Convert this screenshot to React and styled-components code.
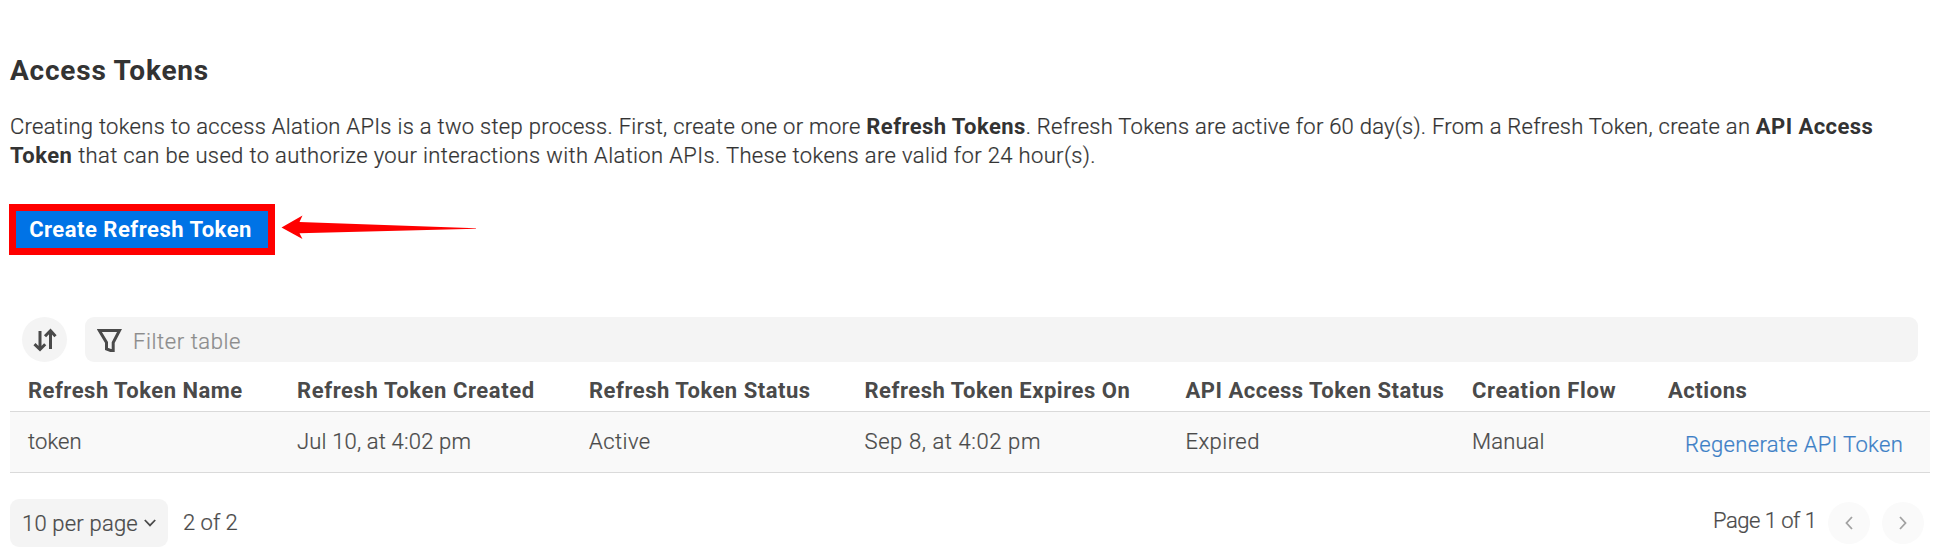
import React from "react";
import styled, { createGlobalStyle } from "styled-components";

const GlobalStyle = createGlobalStyle`
  * { box-sizing: border-box; }
  body {
    margin: 0;
    background: #fff;
    color: #4a4a4a;
    font: 300 22px/29px Roboto, "Liberation Sans", sans-serif;
    -webkit-text-stroke: 0.22px currentColor;
  }
  button, input { font: inherit; color: inherit; border: 0; padding: 0; margin: 0; }
`;

const Text = styled.span`
  white-space: pre;
  letter-spacing: ${(p) => p.$track || 0}px;
`;

const Strong = styled(Text).attrs({ as: "strong" })`
  font-weight: 700;
  -webkit-text-stroke: 0;
`;

const Page = styled.main`
  width: 1934px;
  height: 558px;
  padding: 53px 4px 0 10px;
  display: flex;
  flex-direction: column;
  overflow: hidden;
`;

const Title = styled.h1`
  margin: 0;
  height: 36px;
  color: #333;
  font-size: 28px;
  line-height: 36px;
  font-weight: 700;
  letter-spacing: 0.78px;
  -webkit-text-stroke: 0;
`;

const Intro = styled.p`
  margin: 23px 0 0;
  color: #333;
  white-space: nowrap;
`;

const CreateRow = styled.div`
  display: flex;
  align-items: flex-start;
  gap: 6px;
  margin: 34px 0 0 -1px;
`;

const CreateButton = styled.button`
  width: 266px;
  height: 51px;
  border: 7.5px solid #ff0000;
  background: #0073e6;
  color: #fff;
  font-weight: 700;
  letter-spacing: 0.5px;
  padding: 0 3px 0 0;
  white-space: nowrap;
  -webkit-text-stroke: 0;
`;

const Arrow = styled.svg`
  width: 196px;
  height: 26px;
  margin-top: 10px;
`;

const Toolbar = styled.div`
  display: flex;
  align-items: center;
  gap: 18px;
  margin: 62px 12px 0;
`;

const SortButton = styled.button`
  display: grid;
  place-items: center;
  width: 45px;
  height: 45px;
  border-radius: 50%;
  background: #f4f4f4;
`;

const Filter = styled.label`
  flex: 1;
  display: flex;
  align-items: center;
  gap: 11px;
  height: 45px;
  padding-left: 12px;
  border-radius: 9px;
  background: #f4f4f4;
`;

const FilterInput = styled.input`
  flex: 1;
  height: 29px;
  margin-top: 3px;
  background: none;
  outline: 0;
  letter-spacing: 0.6px;
  &::placeholder { color: #8c8c8c; opacity: 1; }
`;

const Row = styled.div`
  display: grid;
  grid-template-columns: 269px 292px 275.5px 321px 286.5px 196px 1fr;
  padding-left: 18px;
`;

const HeadRow = styled(Row)`
  height: 49px;
  padding-top: 14px;
  font-weight: 700;
  -webkit-text-stroke: 0;
`;

const BodyRow = styled(Row)`
  height: 62px;
  padding-top: 15px;
  border: solid #dadada;
  border-width: 1px 0;
  background: #f9f9f9;
`;

const ActionLink = styled.a`
  margin: 3px 0 0 17px;
  color: #3d80c6;
  letter-spacing: 0.33px;
  white-space: nowrap;
`;

const Footer = styled.footer`
  display: flex;
  align-items: flex-start;
  margin-top: 26px;
`;

const PageSize = styled.button`
  display: flex;
  align-items: center;
  gap: 6px;
  width: 158px;
  height: 48px;
  padding: 0 0 0 12px;
  border-radius: 9px;
  background: #f4f4f4;
`;

const Count = styled.div`
  margin: 9px 0 0 15px;
`;

const Pager = styled.nav`
  display: flex;
  align-items: flex-start;
  gap: 12px;
  margin-left: auto;
  padding: 3px 6px 0 0;
`;

const PageLabel = styled.div`
  margin-top: 4px;
  width: 103px;
`;

const PageButton = styled.button`
  display: grid;
  place-items: center;
  width: 42px;
  height: 42px;
  border-radius: 50%;
  background: #fafafa;
  color: #a2a2a2;
`;

const Stroke = styled.svg.attrs({ fill: "none", stroke: "currentColor" })`
  display: block;
  flex: none;
`;

const columns = [
  ["Refresh Token Name", 0.5],
  ["Refresh Token Created", 0.6],
  ["Refresh Token Status", 0.51],
  ["Refresh Token Expires On", 0.52],
  ["API Access Token Status", 0.51],
  ["Creation Flow", 0.66],
  ["Actions", 0.55],
];

const tokenRow = [
  ["token", 0.1],
  ["Jul 10, at 4:02 pm", 0.17],
  ["Active", 0.45],
  ["Sep 8, at 4:02 pm", 0.6],
  ["Expired", 0.45],
  ["Manual", 0.15],
];

export default function App() {
  return (
    <Page>
      <GlobalStyle />
      <Title>Access Tokens</Title>
      <Intro>
        <Text $track={0.29}>{"Creating tokens to access Alation APIs is a two step process. First, create one or more "}</Text>
        <Strong $track={0.43}>Refresh Tokens</Strong>
        <Text $track={0.25}>{". Refresh Tokens are active for 60 day(s). From a Refresh Token, create an "}</Text>
        <Strong $track={0.43}>API Access</Strong>
        <br />
        <Strong $track={0.5}>Token</Strong>
        <Text $track={0.36}>{" that can be used to authorize your interactions with Alation APIs. These tokens are valid for 24 hour(s)."}</Text>
      </Intro>

      <CreateRow>
        <CreateButton>Create Refresh Token</CreateButton>
        <Arrow viewBox="0 0 196 26">
          <path fill="#ff0000" d="M.5 13.5 21.5 1.5 18.5 8 195 14.3v.5L18.5 19.3 21.5 25Z" />
        </Arrow>
      </CreateRow>

      <Toolbar>
        <SortButton aria-label="Sort">
          <Stroke width="24" height="24" strokeWidth="3" strokeLinejoin="miter">
            <path d="M7 3v18M1.5 16.2 7 21.5l5.2-5.3M17.5 21V3M12 8.3 17.5 2.7l5 5.6" />
          </Stroke>
        </SortButton>
        <Filter>
          <Stroke width="25" height="26" strokeWidth="3" strokeLinejoin="miter">
            <path d="M2.3 3.5h20.2L16.2 15.5v8h-2.7l-4-1.5v-6.5Z" />
          </Stroke>
          <FilterInput placeholder="Filter table" />
        </Filter>
      </Toolbar>

      <HeadRow>
        {columns.map(([label, track]) => <Text key={label} $track={track}>{label}</Text>)}
      </HeadRow>
      <BodyRow>
        {tokenRow.map(([value, track]) => <Text key={value} $track={track}>{value}</Text>)}
        <ActionLink>Regenerate API Token</ActionLink>
      </BodyRow>

      <Footer>
        <PageSize>
          <Text $track={0.2}>10 per page</Text>
          <Stroke width="12" height="8" strokeWidth="1.8"><path d="m.8 1 5.2 5.4L11.2 1" /></Stroke>
        </PageSize>
        <Count>2 of 2</Count>
        <Pager>
          <PageLabel><Text $track={-0.5}>Page 1 of 1</Text></PageLabel>
          <PageButton aria-label="Previous page">
            <Stroke width="8" height="14" strokeWidth="1.8"><path d="M7 1 1.5 7 7 13" /></Stroke>
          </PageButton>
          <PageButton aria-label="Next page">
            <Stroke width="8" height="14" strokeWidth="1.8"><path d="m1 1 5.5 6L1 13" /></Stroke>
          </PageButton>
        </Pager>
      </Footer>
    </Page>
  );
}
